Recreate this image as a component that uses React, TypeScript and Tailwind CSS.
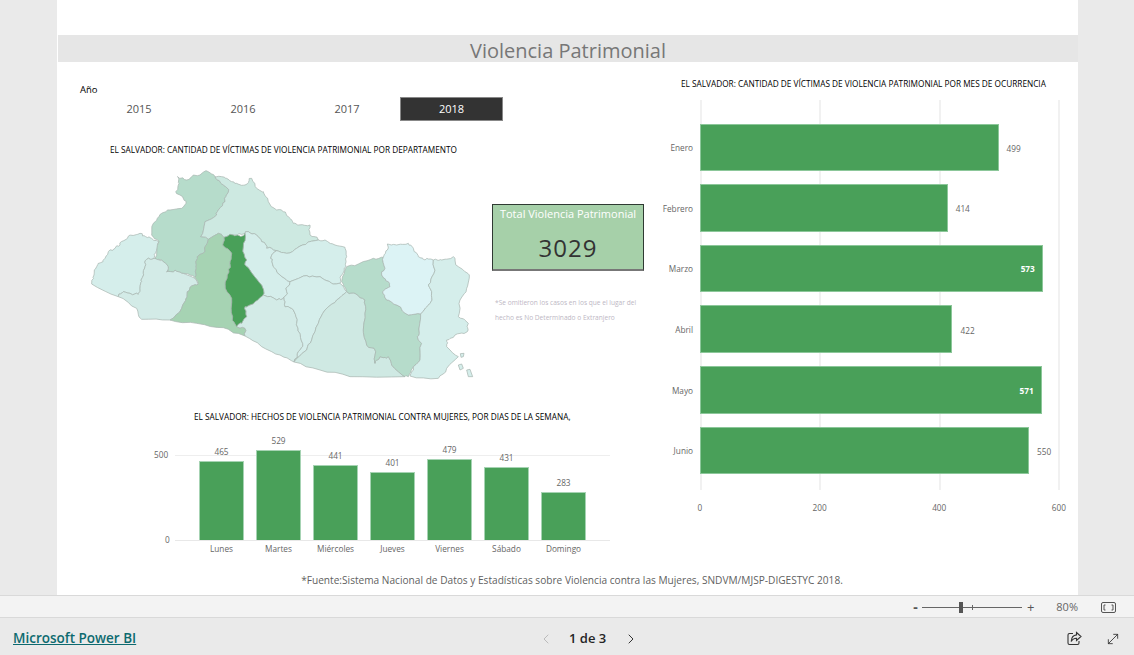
import { ChevronLeft, ChevronRight, MoveDiagonal } from 'lucide-react';

const months = [
  { name: 'Enero', value: 499 },
  { name: 'Febrero', value: 414 },
  { name: 'Marzo', value: 573 },
  { name: 'Abril', value: 422 },
  { name: 'Mayo', value: 571 },
  { name: 'Junio', value: 550 },
];

const days = [
  { name: 'Lunes', value: 465 },
  { name: 'Martes', value: 529 },
  { name: 'Miércoles', value: 441 },
  { name: 'Jueves', value: 401 },
  { name: 'Viernes', value: 479 },
  { name: 'Sábado', value: 431 },
  { name: 'Domingo', value: 283 },
];

const departments = [
  { fill: '#d5eeeb', d: 'M35,372 L42,345 50,320 62,308 75,295 85,275 105,265 120,255 135,240 150,225 165,225 180,220 197,230 215,235 237,245 232,262 228,275 222,295 200,298 195,320 190,340 185,365 180,385 175,403 150,400 130,395 115,410 Z' },
  { fill: '#d3ebe7', d: 'M115,410 L130,395 150,400 175,403 180,385 185,365 190,340 195,320 200,298 222,295 245,300 265,320 260,335 285,330 310,340 345,355 355,372 335,378 322,395 318,415 305,445 270,480 185,478 170,445 Z' },
  { fill: '#b6dccb', d: 'M225,295 L237,245 215,225 220,190 232,175 245,160 270,150 305,145 318,130 300,105 287,95 297,70 292,50 320,60 340,45 360,45 378,32 405,50 418,62 430,75 445,97 435,125 415,150 410,165 375,185 362,230 385,238 375,275 352,290 348,320 345,352 310,340 285,330 260,335 265,320 245,300 Z' },
  { fill: '#cde9e1', d: 'M405,50 L425,50 440,55 455,65 470,70 495,75 505,68 515,55 530,85 550,95 565,125 590,150 610,155 625,170 640,190 655,195 690,195 690,225 715,240 680,250 650,265 620,280 590,272 560,265 545,245 530,225 505,215 495,220 460,225 432,232 415,220 385,238 362,230 375,185 410,165 415,150 435,125 445,97 430,75 418,62 Z' },
  { fill: '#a6d3b3', d: 'M385,238 L415,220 432,232 428,255 455,280 450,310 442,345 436,385 455,415 458,470 470,500 495,505 495,528 430,503 350,490 270,480 305,445 318,415 322,395 335,378 355,372 345,352 348,320 352,290 375,275 Z' },
  { fill: '#d5eeeb', d: 'M495,220 L505,215 530,225 545,245 560,265 590,272 572,295 580,320 600,345 630,365 620,395 612,412 590,420 550,405 525,425 552,400 545,375 520,345 498,318 500,300 490,260 Z' },
  { fill: '#d5eeeb', d: 'M590,272 L620,280 650,265 680,250 715,240 735,240 765,255 795,262 800,290 798,320 785,345 780,370 755,370 720,350 680,347 630,365 600,345 580,320 572,295 Z' },
  { fill: '#d3ebe7', d: 'M525,425 L550,405 590,420 612,412 615,440 640,450 650,490 660,520 668,550 655,575 642,606 600,585 545,560 495,528 495,505 470,500 485,490 500,470 495,440 Z' },
  { fill: '#d5eeeb', d: 'M630,365 L680,347 720,350 755,370 780,370 800,395 770,420 735,450 715,490 695,540 680,570 642,606 655,575 668,550 660,520 650,490 640,450 615,440 612,412 620,395 Z' },
  { fill: '#cfe9e3', d: 'M642,606 L680,570 695,540 715,490 735,450 770,420 800,395 825,400 855,420 855,460 850,510 860,555 885,570 885,610 900,590 925,590 935,615 975,650 810,650 720,630 Z' },
  { fill: '#b6dccb', d: 'M785,365 L800,320 835,312 880,295 910,292 915,325 905,345 925,365 930,380 908,395 920,420 950,435 985,465 1022,462 1018,520 1012,530 1025,550 1020,600 1000,620 985,650 975,650 935,615 925,590 900,590 885,610 885,570 860,555 850,510 855,460 855,420 825,400 800,395 Z' },
  { fill: '#dcf3f5', d: 'M910,292 L922,270 922,252 950,255 985,250 1000,265 1015,290 1035,300 1060,300 1062,340 1045,375 1055,395 1050,430 1022,462 985,465 950,435 920,420 908,395 930,380 925,365 905,345 915,325 Z' },
  { fill: '#d5eeeb', d: 'M1060,300 L1085,300 1120,290 1135,320 1168,345 1160,385 1140,420 1135,470 1165,490 1162,515 1125,525 1100,540 1100,560 1135,590 1100,625 1075,655 990,648 1000,620 1020,600 1025,550 1012,530 1018,520 1022,462 1050,430 1055,395 1045,375 1062,340 Z' },
  { fill: '#49a059', d: 'M432,232 L460,225 480,228 495,220 490,260 500,300 498,318 520,345 545,375 552,400 525,425 495,440 500,470 485,490 470,500 458,470 455,415 436,385 442,345 450,310 455,280 428,255 Z' },
];

const islands = 'M1141,581 L1152,580 1150,590 1143,592 Z M1135,615 L1145,612 1150,625 1140,630 Z M1160,630 L1170,628 1178,650 1165,650 Z';

// the borders in the picture are wobbly, so split each edge and nudge the midpoint.
// the nudge comes from the midpoint itself, so two departments sharing an edge stay glued
const nudge = (x: number, y: number) => {
  const n = Math.sin(x * 12.9898 + y * 78.233) * 43758.5453;
  return (n - Math.floor(n) - 0.5) * 7;
};

const roughen = (d: string) => {
  const pts = d.replace(/[MLZ]/g, ' ').trim().split(/\s+/).map(p => p.split(',').map(Number));
  const split = (a: number[], b: number[], depth: number): number[][] => {
    if (depth === 0 || Math.hypot(a[0] - b[0], a[1] - b[1]) < 9) return [];
    const mx = (a[0] + b[0]) / 2;
    const my = (a[1] + b[1]) / 2;
    const mid = [mx + nudge(mx, my), my + nudge(my, mx)];
    return [...split(a, mid, depth - 1), mid, ...split(mid, b, depth - 1)];
  };
  const out = pts.flatMap((p, i) => [p, ...split(p, pts[(i + 1) % pts.length], 2)]);
  return 'M' + out.map(p => `${p[0].toFixed(1)},${p[1].toFixed(1)}`).join(' L') + ' Z';
};

const ChartTitle = ({ children }: { children: string }) => (
  <h2 className="text-[8.25px] leading-[12px] text-black whitespace-nowrap">{children}</h2>
);

function MonthChart() {
  return (
    <div className="flex">
      <div className="w-[43px] mt-[17.2px] shrink-0 mr-[7px]">
        {months.map(m => (
          <div key={m.name} className="h-[60.6px] pt-[2px] flex items-center justify-end text-[8.25px] text-[#666]">
            {m.name}
          </div>
        ))}
      </div>
      <div className="relative w-[360px]">
        <div className="absolute top-0 left-0 w-[2px] h-[390px] bg-[#f1f1f1]" />
        <div className="absolute top-0 left-[119px] w-[2px] h-[390px] bg-[#f1f1f1]" />
        <div className="absolute top-0 left-[239px] w-[2px] h-[390px] bg-[#f1f1f1]" />
        <div className="absolute top-0 left-[358px] w-[2px] h-[390px] bg-[#f1f1f1]" />
        <div className="relative pt-[17.2px]">
          {months.map(m => (
            <div key={m.name} className="h-[60.6px] flex items-center">
              <div
                className="h-[47.6px] bg-[#49a059] border border-[#8cc79a] flex items-center justify-end"
                style={{ width: m.value * 0.5983 }}
              >
                {m.value > 560 && (
                  <span className="text-[8.25px] font-bold text-white pr-[7px] pt-[2px]">{m.value}</span>
                )}
              </div>
              {m.value <= 560 && (
                <span className="text-[8.25px] text-[#666] ml-[8px] pt-[3px]">{m.value}</span>
              )}
            </div>
          ))}
        </div>
        <div className="relative flex -ml-[60px] mt-[21px] text-[8.25px] text-[#666] leading-[12px]">
          {[0, 200, 400, 600].map(t => (
            <span key={t} className="w-[119.7px] shrink-0 text-center">{t}</span>
          ))}
        </div>
      </div>
    </div>
  );
}

function DayChart() {
  return (
    <div className="relative ml-[118px] w-[435px] h-[86px] mt-[32px] border-b border-[#e8e8e8]">
      <div className="absolute top-0 left-0 w-full h-px bg-[#eeeeee]" />
      <span className="absolute top-[-6px] left-[-21px] text-[8.25px] leading-[12px] text-[#666]">500</span>
      <span className="absolute bottom-[-6px] left-[-10px] text-[8.25px] leading-[12px] text-[#666]">0</span>
      <div className="relative flex items-end gap-[12px] pl-[24px] h-full">
        {days.map(d => (
          <div key={d.name} className="relative w-[45px] shrink-0">
            <div className="text-center text-[8.25px] leading-[12px] mb-[3px] text-[#666]">{d.value}</div>
            <div className="bg-[#49a059] border border-[#a6d3b3] border-b-0" style={{ height: d.value * 0.17 }} />
            <div className="absolute top-full left-1/2 -translate-x-1/2 mt-[3px] whitespace-nowrap text-[8.25px] leading-[12px] text-[#666]">
              {d.name}
            </div>
          </div>
        ))}
      </div>
    </div>
  );
}

export default function App() {
  return (
    <div className="w-[1134px] h-[655px] overflow-hidden bg-[#eaeaea] font-['Open_Sans',sans-serif] flex flex-col">
      <main className="h-[595px] w-[1021px] ml-[57px] bg-white shrink-0 pt-[35px]">
        <h1 className="ml-px h-[27px] bg-[#e6e6e6] text-center text-[20px] leading-[31px] text-[#777777]">
          Violencia Patrimonial
        </h1>

        <div className="flex">
          <section className="w-[593px] shrink-0">
            <div className="ml-[23px] mt-[21px] text-[9.5px] leading-[14px] text-black">Año</div>
            <div className="flex ml-[30px] text-[11px]">
              {['2015', '2016', '2017'].map(y => (
                <div key={y} className="w-[104px] h-[24px] flex items-center justify-center text-[#555]">
                  {y}
                </div>
              ))}
              <div className="w-[103px] h-[24px] ml-[1px] flex items-center justify-center bg-[#333333] border border-[#888] text-white">
                2018
              </div>
            </div>

            <div className="ml-[53px] mt-[23px]">
              <ChartTitle>EL SALVADOR: CANTIDAD DE VÍCTIMAS DE VIOLENCIA PATRIMONIAL POR DEPARTAMENTO</ChartTitle>
            </div>

            <div className="flex ml-[23px] mt-[4px]">
              <svg viewBox="0 0 1230 690" className="w-[410px] h-[230px] shrink-0">
                {departments.map((p, i) => (
                  <path key={i} d={roughen(p.d)} fill={p.fill} stroke="#a9b7b1" strokeWidth="2.2" strokeLinejoin="round" />
                ))}
                <path d={islands} fill="#d5eeeb" stroke="#a9b7b1" strokeWidth="2.2" />
              </svg>
              <div className="ml-[2px] pt-[44px]">
                <div className="w-[152px] h-[67px] bg-[#a6d0a9] border border-[#2f3a33] border-b-2 border-b-[#777] text-center">
                  <div className="text-[11px] leading-[18px] text-white whitespace-nowrap">Total Violencia Patrimonial</div>
                  <div className="text-[24px] leading-[32px] mt-[9px] tracking-[1px] text-[#333]">3029</div>
                </div>
                <p className="ml-[3px] mt-[24px] text-[6.6px] leading-[15px] text-[#bdb7c4] whitespace-nowrap">
                  *Se omitieron los casos en los que el lugar del
                  <br />
                  hecho es No Determinado o Extranjero
                </p>
              </div>
            </div>

            <div className="mt-[21px] ml-[137px]">
              <ChartTitle>EL SALVADOR: HECHOS DE VIOLENCIA PATRIMONIAL CONTRA MUJERES, POR DIAS DE LA SEMANA,</ChartTitle>
            </div>
            <DayChart />
          </section>

          <section>
            <div className="ml-[31px] mt-[16px] mb-[10px]">
              <ChartTitle>EL SALVADOR: CANTIDAD DE VÍCTIMAS DE VIOLENCIA PATRIMONIAL POR MES DE OCURRENCIA</ChartTitle>
            </div>
            <MonthChart />
          </section>
        </div>

        <p className="mt-[31px] pl-[9px] text-center text-[10.15px] leading-[16px] text-[#5f5f5f]">
          *Fuente:Sistema Nacional de Datos y Estadísticas sobre Violencia contra las Mujeres, SNDVM/MJSP-DIGESTYC 2018.
        </p>
      </main>

      <div className="h-[23px] bg-[#f3f3f3] border-t border-b border-[#d9d9d9] shrink-0 flex items-center justify-end pr-[18px] pt-px text-[#555]">
        <span className="text-[14px] font-bold leading-none mr-[4px]">-</span>
        <div className="relative w-[100px] h-px bg-[#666] flex items-center">
          <div className="absolute left-[37px] w-[4px] h-[11px] bg-[#555]" />
          <div className="absolute left-[50px] w-px h-[5px] bg-[#666]" />
        </div>
        <span className="text-[13px] leading-none ml-[5px]">+</span>
        <span className="text-[11px] ml-[22px] mr-[23px] text-[#666]">80%</span>
        <svg width="15" height="11" viewBox="0 0 15 11" fill="none" stroke="#555" strokeWidth="1">
          <rect x="0.5" y="0.5" width="14" height="10" rx="1.5" />
          <path d="M4.5 3H3V8H4.5M10.5 3H12V8H10.5" />
        </svg>
      </div>

      <footer className="flex-1 flex items-center relative pl-[13px] pt-[4px]">
        <a className="text-[13.5px] font-semibold text-[#0d6a6f] underline">Microsoft Power BI</a>
        <div className="absolute left-[538px] flex items-center text-[#252525]">
          <ChevronLeft className="w-[16px] h-[16px] text-[#bbb]" strokeWidth={1.5} />
          <span className="text-[13px] font-semibold ml-[15px] mr-[17px]">1 de 3</span>
          <ChevronRight className="w-[16px] h-[16px] text-[#333]" strokeWidth={1.5} />
        </div>
        <div className="ml-auto flex items-center gap-[23px] pr-[13px] text-[#333]">
          <svg width="15" height="15" viewBox="0 0 15 15" fill="none" stroke="currentColor" strokeWidth="1.1">
            <path d="M6 2.5H2.5a1.5 1.5 0 0 0-1.5 1.5v8a1.5 1.5 0 0 0 1.5 1.5h8a1.5 1.5 0 0 0 1.5-1.5V10" />
            <path d="M9.5 1.5L14 5.5 9.5 9.5V7.2C7 7.2 5.3 8.2 4.2 10.5 4.4 7 6.3 4.2 9.5 3.9Z" />
          </svg>
          <MoveDiagonal className="w-[16px] h-[16px]" strokeWidth={1.3} />
        </div>
      </footer>
    </div>
  );
}
